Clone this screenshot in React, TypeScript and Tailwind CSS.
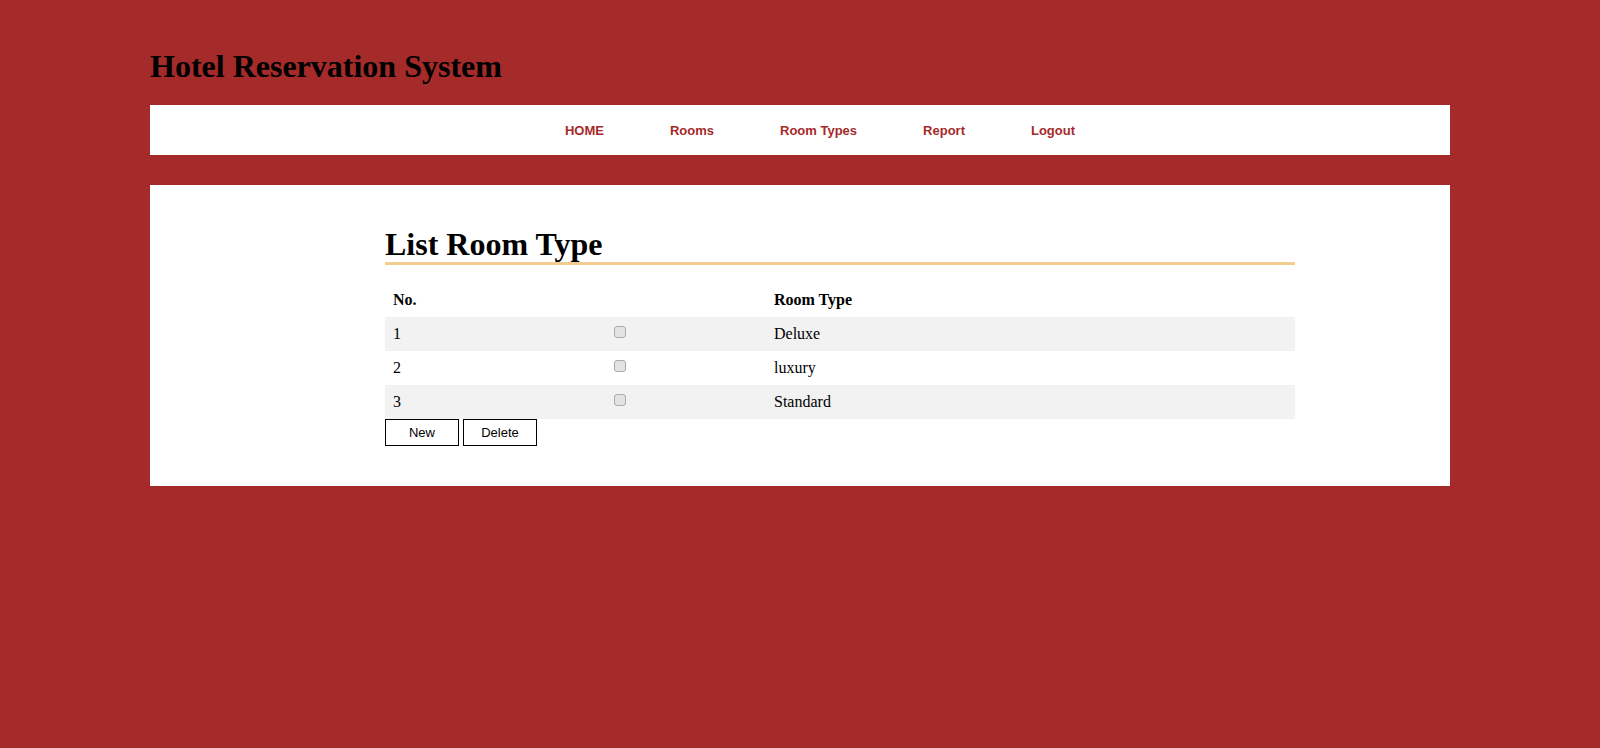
import { useState } from "react";

type RoomType = {
  id: number;
  nama: string;
};

const menu = ["HOME", "Rooms", "Room Types", "Report", "Logout"];

const dados: RoomType[] = [
  { id: 1, nama: "Deluxe" },
  { id: 2, nama: "luxury" },
  { id: 3, nama: "Standard" },
];

export default function App() {
  const [marcados, setMarcados] = useState<number[]>([]);

  const alternar = (id: number) => {
    setMarcados((prev) =>
      prev.includes(id) ? prev.filter((x) => x !== id) : [...prev, id]
    );
  };

  return (
    <div className="min-h-[748px] bg-[#a52a2a] font-['Liberation_Serif',serif] text-black">
      <div className="mx-[150px] pt-[48px]">
        <h1 className="text-[32px] leading-[36px] font-bold mb-[21px]">
          Hotel Reservation System
        </h1>

        <nav className="bg-white h-[50px] flex items-center justify-center pl-[40px] pt-[2px]">
          {menu.map((item) => (
            <a
              key={item}
              href="#"
              className="px-[33px] text-[13px] font-bold text-[#a52a2a] font-['Liberation_Sans',Arial,sans-serif]"
            >
              {item}
            </a>
          ))}
        </nav>

        <main className="bg-white mt-[30px] pt-[41px] pb-[40px]">
          <div className="ml-[235px] w-[910px]">
            <h1 className="text-[32px] leading-[36px] font-bold border-b-[3px] border-[#f2cd8f]">
              List Room Type
            </h1>

            <table className="mt-[18px] w-full border-collapse text-[16px]">
              <thead>
                <tr className="h-[34px] text-left">
                  <th className="w-[217px] px-[8px] font-bold">No.</th>
                  <th className="w-[164px] px-[8px]"></th>
                  <th className="px-[8px] font-bold">Room Type</th>
                </tr>
              </thead>
              <tbody>
                {dados.map((r, i) => (
                  <tr
                    key={r.id}
                    className={`h-[34px] ${i % 2 === 0 ? "bg-[#f2f2f2]" : "bg-white"}`}
                  >
                    <td className="px-[8px]">{r.id}</td>
                    <td className="px-[8px]">
                      <input
                        type="checkbox"
                        checked={marcados.includes(r.id)}
                        onChange={() => alternar(r.id)}
                        className="appearance-none block ml-[4px] mb-[4px] w-[12px] h-[12px] rounded-[3px] border border-[#ababab] bg-[#e3e3e3] checked:bg-[#7aa7e0]"
                      />
                    </td>
                    <td className="px-[8px]">{r.nama}</td>
                  </tr>
                ))}
              </tbody>
            </table>

            <div className="flex gap-[4px] font-['Liberation_Sans',Arial,sans-serif]">
              <button className="w-[74px] h-[27px] border border-black bg-white text-[13px]">
                New
              </button>
              <button className="w-[74px] h-[27px] border border-black bg-white text-[13px]">
                Delete
              </button>
            </div>
          </div>
        </main>
      </div>
    </div>
  );
}
